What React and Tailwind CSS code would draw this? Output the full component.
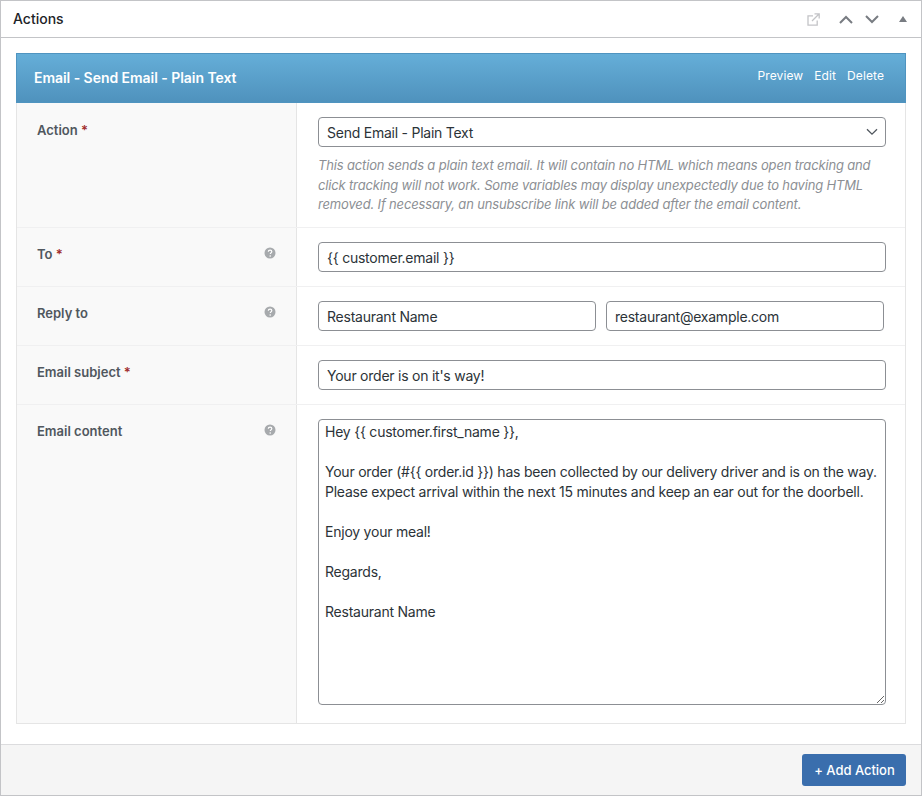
import React from "react";

const font = { fontFamily: "Inter, 'Liberation Sans', sans-serif" };
const inputCls = "h-[30px] rounded-[4px] border border-[#8c8f94] bg-white px-2 text-[14px] tracking-[-0.24px] text-[#2c3338] outline-none";

function Help() {
  return (
    <svg width="12" height="12" viewBox="0 0 12 12" className="mt-[2px]">
      <circle cx="6" cy="6" r="5.5" fill="#a7aaad" />
      <path d="M4.3 4.7c0-1 .8-1.6 1.8-1.6s1.7.6 1.7 1.5c0 .7-.4 1-.9 1.3-.4.3-.6.5-.6 1" fill="none" stroke="#fff" strokeWidth="1.2" />
      <circle cx="6.2" cy="9" r=".8" fill="#fff" />
    </svg>
  );
}

function Row({ label, req, help, children, last, height, labelPad = "pt-[17px]" }) {
  return (
    <div className={`flex ${height} ${last ? "" : "border-b border-[#f0f0f1]"}`}>
      <div className={`flex w-[280px] shrink-0 justify-between border-r border-[#e5e5e5] bg-[#f9f9f9] pl-[20px] pr-[20px] ${labelPad}`}>
        <div className="text-[13px] leading-[18px] font-semibold text-[#50575e]">
          {label}
          {req && <span className="text-[#a02c2c]"> *</span>}
        </div>
        {help && <Help />}
      </div>
      <div className="min-w-0 flex-1 pl-[21px] pr-[19px] pt-[14px]">{children}</div>
    </div>
  );
}

const content = `Hey {{ customer.first_name }},

Your order (#{{ order.id }}) has been collected by our delivery driver and is on the way. Please expect arrival within the next 15 minutes and keep an ear out for the doorbell.

Enjoy your meal!

Regards,

Restaurant Name`;

export default function App() {
  return (
    <div style={font} className="h-[796px] w-[922px] bg-white">
      <div className="flex h-[796px] flex-col border border-[#c3c4c7] bg-white">
        <div className="flex h-[37px] shrink-0 items-center justify-between border-b border-[#c3c4c7] pl-[12px] pr-[13px]">
          <h2 className="-mt-[2px] text-[14px] font-medium text-[#1d2327]">Actions</h2>
          <div className="flex items-center">
            <svg width="13" height="13" viewBox="0 0 13 13" fill="none" stroke="#c3c4c7" strokeWidth="1.3" className="mr-[19px]">
              <path d="M6 2.8H1v9.4h9.2V7.5" />
              <path d="M7.5.8h4.7v4.7M12 1 5 8" />
            </svg>
            <svg width="14" height="9" viewBox="0 0 14 9" fill="none" stroke="#787c82" strokeWidth="2" className="mr-[12px]">
              <path d="M1 8l6-6 6 6" />
            </svg>
            <svg width="14" height="9" viewBox="0 0 14 9" fill="none" stroke="#787c82" strokeWidth="2" className="mr-[20px]">
              <path d="M1 1l6 6 6-6" />
            </svg>
            <svg width="8" height="6" viewBox="0 0 8 6" className="mr-[1px]">
              <path d="M4 0l4 6H0z" fill="#787c82" />
            </svg>
          </div>
        </div>

        <div className="flex-1 px-[15px] pt-[15px]">
          <div className="border-x border-b border-[#e5e5e5]">
            <div className="-mx-px flex h-[50px] items-start justify-between border border-[#4f94c0] bg-gradient-to-b from-[#65aed8] to-[#4f92bd] pl-[17px] pr-[21px]">
              <div className="pt-[15px] text-[14px] leading-[18px] font-semibold tracking-[-0.05px] text-white">Email - Send Email - Plain Text</div>
              <div className="flex gap-[11px] pt-[13px] text-[12px] leading-[18px] tracking-[0.1px] text-white">
                <span>Preview</span>
                <span>Edit</span>
                <span>Delete</span>
              </div>
            </div>

            <Row label="Action" req height="h-[125px]" labelPad="pt-[18px]">
              <div className="relative">
                <select className={`${inputCls} w-full appearance-none`} defaultValue="a">
                  <option value="a">Send Email - Plain Text</option>
                </select>
                <svg width="12" height="8" viewBox="0 0 12 8" fill="none" stroke="#50575e" strokeWidth="1.3" className="pointer-events-none absolute right-[8px] top-[11px]">
                  <path d="M1 1.2l5 5 5-5" />
                </svg>
              </div>
              <p className="mt-[9px] text-[13px] leading-[19.5px] italic tracking-[-0.16px] text-[#8c8f94]">
                This action sends a plain text email. It will contain no HTML which means open tracking and click tracking will not work. Some variables may display unexpectedly due to having HTML removed. If necessary, an unsubscribe link will be added after the email content.
              </p>
            </Row>

            <Row label="To" req help height="h-[59px]">
              <input readOnly value="{{ customer.email }}" className={`${inputCls} w-full`} />
            </Row>

            <Row label="Reply to" help height="h-[59px]">
              <div className="flex gap-[10px] pr-[2px]">
                <input readOnly value="Restaurant Name" className={`${inputCls} w-[278px]`} />
                <input readOnly value="restaurant@example.com" className={`${inputCls} w-[278px]`} />
              </div>
            </Row>

            <Row label="Email subject" req height="h-[59px]">
              <input readOnly value="Your order is on it's way!" className={`${inputCls} w-full`} />
            </Row>

            <Row label="Email content" help last height="h-[318px]">
              <textarea
                readOnly
                value={content}
                className="block h-[286px] w-full rounded-[4px] border border-[#8c8f94] bg-white px-[6px] py-[2px] text-[14px] leading-[20px] tracking-[-0.23px] text-[#2c3338] outline-none"
              />
            </Row>
          </div>
        </div>

        <div className="flex h-[51px] shrink-0 items-center justify-end border-t border-[#dcdcde] bg-[#f5f5f5] pr-[15px]">
          <button className="h-[32px] w-[104px] rounded-[3px] bg-[#3a6ead] pt-[2px] pl-[1px] text-[13px] font-medium tracking-[-0.03px] text-white">+ Add Action</button>
        </div>
      </div>
    </div>
  );
}
